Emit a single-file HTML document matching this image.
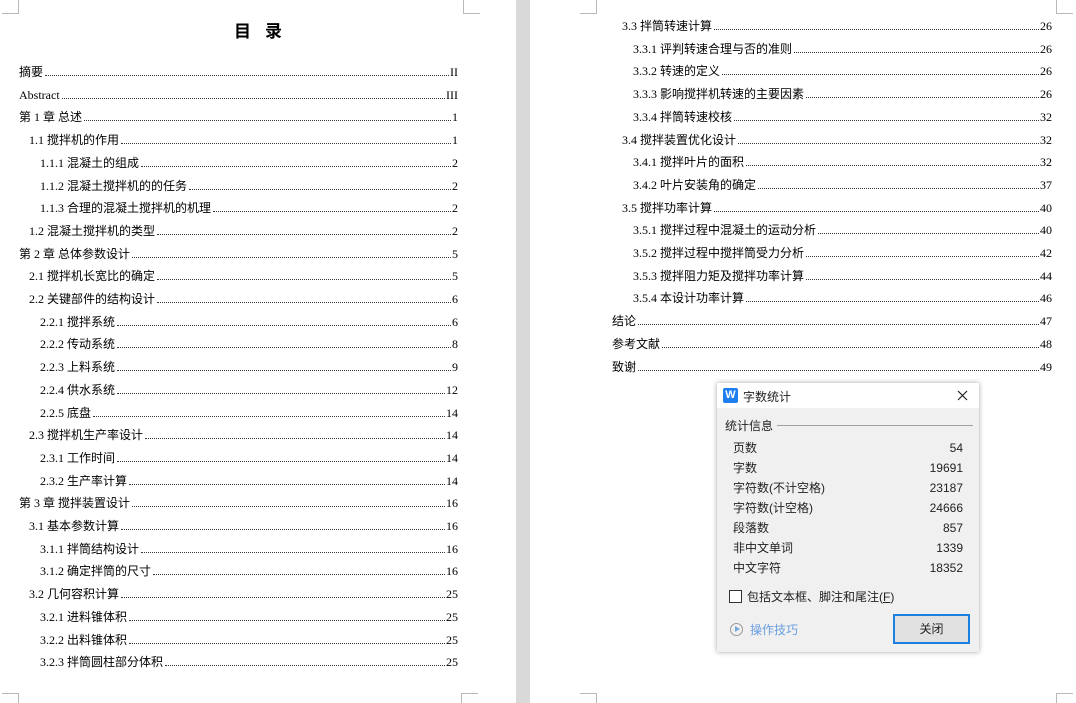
<!DOCTYPE html>
<html><head><meta charset="utf-8"><style>
*{margin:0;padding:0;box-sizing:border-box}
body{width:1076px;height:703px;overflow:hidden;background:#fff;position:relative;font-family:"Liberation Serif","Noto Sans CJK SC",serif;color:#000}
.gap{position:absolute;left:516px;top:0;width:14px;height:703px;background:#d9d9da}
.m{position:absolute;border-color:#b8b8b8;border-style:solid;border-width:0}
.e{position:absolute;display:flex;align-items:flex-end;font-size:12px;height:16px;line-height:16px;white-space:nowrap}
.e .d{flex:1;border-bottom:1px dotted #333;margin:0 1px 4px 2px}
h1{position:absolute;left:0;width:516px;top:17px;text-align:center;font-family:"Noto Sans CJK SC",sans-serif;font-size:17px;font-weight:bold;letter-spacing:14px;text-indent:14px}
.dlg{position:absolute;left:717px;top:383px;width:262px;height:269px;background:#f0f0f0;box-shadow:0 0 5px rgba(0,0,0,.35);font-family:"Liberation Sans","Noto Sans CJK SC",sans-serif;font-size:12px;color:#222}
.tb{height:25px;background:#fff;position:relative}
.row{position:absolute;left:16px;width:230px;display:flex;justify-content:space-between;align-items:center;height:18px;line-height:18px}
</style></head><body>
<div class="gap"></div>
<div class="m" style="left:2px;top:0;width:17px;height:14px;border-right-width:1px;border-bottom-width:1px"></div>
<div class="m" style="left:463px;top:0;width:17px;height:14px;border-left-width:1px;border-bottom-width:1px"></div>
<div class="m" style="left:2px;top:693px;width:17px;height:10px;border-right-width:1px;border-top-width:1px"></div>
<div class="m" style="left:461px;top:693px;width:17px;height:10px;border-left-width:1px;border-top-width:1px"></div>
<div class="m" style="left:580px;top:0;width:17px;height:14px;border-right-width:1px;border-bottom-width:1px"></div>
<div class="m" style="left:1056px;top:0;width:17px;height:14px;border-left-width:1px;border-bottom-width:1px"></div>
<div class="m" style="left:580px;top:693px;width:17px;height:10px;border-right-width:1px;border-top-width:1px"></div>
<div class="m" style="left:1056px;top:693px;width:17px;height:10px;border-left-width:1px;border-top-width:1px"></div>
<h1>目录</h1>
<div id="L"></div>
<script>
var L=[[0,"摘要","II"],[0,"Abstract","III"],[0,"第 1 章  总述","1"],[1,"1.1 搅拌机的作用","1"],[2,"1.1.1  混凝土的组成","2"],[2,"1.1.2  混凝土搅拌机的的任务","2"],[2,"1.1.3  合理的混凝土搅拌机的机理","2"],[1,"1.2  混凝土搅拌机的类型","2"],[0,"第 2 章  总体参数设计","5"],[1,"2.1 搅拌机长宽比的确定","5"],[1,"2.2 关键部件的结构设计","6"],[2,"2.2.1 搅拌系统","6"],[2,"2.2.2 传动系统","8"],[2,"2.2.3 上料系统","9"],[2,"2.2.4 供水系统","12"],[2,"2.2.5 底盘","14"],[1,"2.3 搅拌机生产率设计","14"],[2,"2.3.1 工作时间","14"],[2,"2.3.2 生产率计算","14"],[0,"第 3 章 搅拌装置设计","16"],[1,"3.1  基本参数计算","16"],[2,"3.1.1 拌筒结构设计","16"],[2,"3.1.2 确定拌筒的尺寸","16"],[1,"3.2  几何容积计算","25"],[2,"3.2.1 进料锥体积","25"],[2,"3.2.2 出料锥体积","25"],[2,"3.2.3 拌筒圆柱部分体积","25"]];
var R=[[1,"3.3 拌筒转速计算","26"],[2,"3.3.1 评判转速合理与否的准则","26"],[2,"3.3.2 转速的定义","26"],[2,"3.3.3 影响搅拌机转速的主要因素","26"],[2,"3.3.4  拌筒转速校核","32"],[1,"3.4 搅拌装置优化设计","32"],[2,"3.4.1 搅拌叶片的面积","32"],[2,"3.4.2 叶片安装角的确定","37"],[1,"3.5 搅拌功率计算","40"],[2,"3.5.1 搅拌过程中混凝土的运动分析","40"],[2,"3.5.2 搅拌过程中搅拌筒受力分析","42"],[2,"3.5.3  搅拌阻力矩及搅拌功率计算","44"],[2,"3.5.4 本设计功率计算","46"],[0,"结论","47"],[0,"参考文献","48"],[0,"致谢","49"]];
var h="";
L.forEach(function(e,i){var x=[19,29,40][e[0]];h+='<div class="e" style="left:'+x+'px;width:'+(458-x)+'px;top:'+(64+i*22.7)+'px"><span>'+e[1]+'</span><span class="d"></span><span>'+e[2]+'</span></div>'});
R.forEach(function(e,i){var x=[612,622,633][e[0]];h+='<div class="e" style="left:'+x+'px;width:'+(1052-x)+'px;top:'+(18+i*22.7)+'px"><span>'+e[1]+'</span><span class="d"></span><span>'+e[2]+'</span></div>'});
document.getElementById("L").innerHTML=h;
</script>
<div class="dlg">
<div class="tb">
<div style="position:absolute;left:6px;top:5px;width:15px;height:15px;background:#1e7ff0;border-radius:2px;color:#fff;font-size:11px;font-weight:bold;text-align:center;line-height:15px">W</div>
<div style="position:absolute;left:26px;top:5px">字数统计</div>
<svg style="position:absolute;left:240px;top:7px" width="11" height="11"><path d="M1 1L10 10M10 1L1 10" stroke="#222" stroke-width="1.2"/></svg>
</div>
<div style="position:absolute;left:8px;top:34px">统计信息</div>
<div style="position:absolute;left:60px;top:42px;width:196px;height:1px;background:#a0a0a0"></div>
<div class="row" style="top:56px"><span>页数</span><span>54</span></div>
<div class="row" style="top:76px"><span>字数</span><span>19691</span></div>
<div class="row" style="top:96px"><span>字符数(不计空格)</span><span>23187</span></div>
<div class="row" style="top:116px"><span>字符数(计空格)</span><span>24666</span></div>
<div class="row" style="top:136px"><span>段落数</span><span>857</span></div>
<div class="row" style="top:156px"><span>非中文单词</span><span>1339</span></div>
<div class="row" style="top:176px"><span>中文字符</span><span>18352</span></div>
<div style="position:absolute;left:12px;top:207px;width:13px;height:13px;border:1px solid #333;background:#fff"></div>
<div style="position:absolute;left:30px;top:205px">包括文本框、脚注和尾注(<u>F</u>)</div>
<div style="position:absolute;left:13px;top:240px;width:13px;height:13px;border:1px solid #999;border-radius:50%"></div>
<div style="position:absolute;left:18px;top:243px;width:0;height:0;border-left:5px solid #7aa6e0;border-top:3.5px solid transparent;border-bottom:3.5px solid transparent"></div>
<div style="position:absolute;left:33px;top:238px;color:#6a9ee0">操作技巧</div>
<div style="position:absolute;left:176px;top:231px;width:77px;height:30px;border:2px solid #1a7fe0;background:#e1e1e1;text-align:center;line-height:26px">关闭</div>
</div>
</body></html>
